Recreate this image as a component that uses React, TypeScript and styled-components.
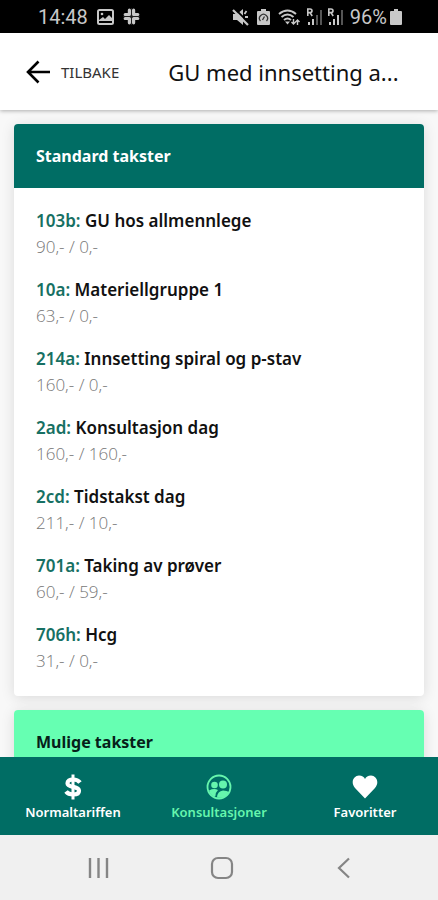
import React from "react";
import styled, { createGlobalStyle } from "styled-components";

const Global = createGlobalStyle`
  *, *::before, *::after { box-sizing: border-box; }
  html, body { margin: 0; }
  body { background: #f8f8f8; font-family: "Noto Sans", "Open Sans", sans-serif; color: #111; }
  button { font: inherit; border: 0; background: none; padding: 0; margin: 0; cursor: pointer; color: inherit; }
`;

const Screen = styled.div`
  height: 100vh;
  display: flex;
  flex-direction: column;
  overflow: hidden;
`;

const StatusBar = styled.div`
  flex: none;
  height: 33px;
  padding: 0 36px 0 38px;
  background: #000;
  color: #c8c8c8;
  display: flex;
  align-items: center;
  justify-content: space-between;
  font: 400 20px/24px Roboto, sans-serif;
`;

const StatusGroup = styled.div<{ $gap: number }>`
  display: flex;
  align-items: center;
  gap: ${(p) => p.$gap}px;
`;

const Header = styled.header`
  flex: none;
  position: relative;
  z-index: 1;
  height: 77px;
  padding: 0 30px 0 26px;
  background: #fff;
  box-shadow: 0 1px 4px rgba(0, 0, 0, 0.3);
  display: flex;
  align-items: center;
  gap: 49px;
`;

const BackButton = styled.button`
  flex: none;
  display: flex;
  align-items: center;
  gap: 10px;
  && { font-size: 15px; }
  color: #333;
`;

const Title = styled.h1`
  margin: 0;
  flex: 1;
  min-width: 0;
  font-size: 22px;
  line-height: 30px;
  font-weight: 400;
  white-space: nowrap;
`;

const Content = styled.main`
  flex: 1;
  min-height: 0;
  overflow: hidden;
  padding: 14px 14px 0;
  display: flex;
  flex-direction: column;
  gap: 14px;
`;

const Card = styled.section`
  flex: none;
  background: #fff;
  border-radius: 4px;
  overflow: hidden;
  box-shadow: 0 2px 14px rgba(0, 0, 0, 0.12);
`;

const CardTitle = styled.h2<{ $light?: boolean }>`
  margin: 0;
  padding: 20px 22px;
  font-size: 16px;
  line-height: 24px;
  font-weight: 700;
  background: ${(p) => (p.$light ? "#66ffb2" : "#006d64")};
  color: ${(p) => (p.$light ? "#062019" : "#fff")};
`;

const RateList = styled.ul`
  list-style: none;
  margin: 0;
  padding: 20px 22px 22px;
  display: flex;
  flex-direction: column;
  gap: 17px;
`;

const RateName = styled.div`
  font-size: 17px;
  line-height: 26px;
  font-weight: 600;
`;

const Code = styled.span`
  color: #177063;
`;

const Price = styled.div`
  font-family: "Open Sans", sans-serif;
  font-size: 17px;
  line-height: 26px;
  font-weight: 300;
  color: #777;
`;

const TabBar = styled.nav`
  flex: none;
  height: 78px;
  background: #006d64;
  display: grid;
  grid-template-columns: repeat(3, 1fr);
`;

const Tab = styled.button<{ $active?: boolean }>`
  && {
    display: flex;
    flex-direction: column;
    align-items: center;
    justify-content: center;
    gap: 2px;
    padding-top: 4px;
    color: ${(p) => (p.$active ? "#66f5ad" : "#fff")};
    font-size: 13px;
    line-height: 20px;
    font-weight: 600;
  }
`;

const SystemNav = styled.div`
  flex: none;
  height: 65px;
  background: #f0f0f0;
  display: flex;
  align-items: center;
  justify-content: space-between;
  padding: 0 82px 0 86px;
`;

const SysButton = styled.button`
  display: flex;
`;

const rates = [
  ["103b", "GU hos allmennlege", "90,- / 0,-"],
  ["10a", "Materiellgruppe 1", "63,- / 0,-"],
  ["214a", "Innsetting spiral og p-stav", "160,- / 0,-"],
  ["2ad", "Konsultasjon dag", "160,- / 160,-"],
  ["2cd", "Tidstakst dag", "211,- / 10,-"],
  ["701a", "Taking av prøver", "60,- / 59,-"],
  ["706h", "Hcg", "31,- / 0,-"],
];

const Picture = () => (
  <svg width="17" height="16" viewBox="0 0 17 16" aria-hidden="true">
    <rect x="1" y="1" width="15" height="14" rx="1.5" fill="none" stroke="#c8c8c8" strokeWidth="2" />
    <path d="M2 11l4-3 2 2 4-4 3 3v3H2Z" fill="#c8c8c8" />
    <circle cx="5" cy="5" r="1.3" fill="#c8c8c8" />
  </svg>
);

const Slack = () => (
  <svg width="17" height="17" viewBox="0 0 17 17" fill="none" stroke="#c8c8c8" strokeWidth="3.2" strokeLinecap="round" aria-hidden="true">
    <path d="M6.400 2.200v4.400M10.600 6.600V6M10.600 2.200v4.400M14.800 10.500h-4.200M10.600 14.800v-4.300M6.400 10.500v4.300M2.200 10.500h4.200M2.200 6.500h4.200M10.600 6.500h4.200" />
    <path d="M8.500 0v17M0 8.500h17" stroke="#222" strokeWidth="0.900" strokeLinecap="butt" />
  </svg>
);

const Muted = () => (
  <svg width="17" height="18" viewBox="0 0 17 18" aria-hidden="true">
    <path d="M1 6h4l6-5v16l-6-5H1Z" fill="#c8c8c8" />
    <path d="M12.500 6l2-3M13 9h3" stroke="#c8c8c8" strokeWidth="1.8" />
    <path d="M3 1l14 14" stroke="#000" strokeWidth="1.800" />
    <path d="M1 2l15 15" stroke="#c8c8c8" strokeWidth="2.200" />
  </svg>
);

const BatterySaver = () => (
  <svg width="13" height="18" viewBox="0 0 13 18" aria-hidden="true">
    <path d="M4 1h5v2h3q1 0 1 1v12q0 1-1 1H1q-1 0-1-1V4q0-1 1-1h3Z" fill="#c8c8c8" />
    <path d="M3.500 13a4 4 0 1 1 6 0M5.500 12l2-3.500" stroke="#333" strokeWidth="1.3" fill="none" />
  </svg>
);

const Wifi = () => (
  <svg width="22" height="18" viewBox="0 0 22 18" fill="none" stroke="#c8c8c8" strokeWidth="2" aria-hidden="true">
    <path d="M1 6q8.500-7 17 0M3.500 9q6-5 12 0M6 12q3.500-3 7 0" />
    <path d="M7 13.500h5L9.500 16.500Z" fill="#c8c8c8" stroke="none" />
    <path d="M15.500 11v5M13.500 14l2 2 2-2M19.500 17v-5M17.500 14l2-2 2 2" strokeWidth="1.400" />
  </svg>
);

const Signal = ({ strong }: { strong?: boolean }) => (
  <svg width="17" height="18" viewBox="0 0 17 18" aria-hidden="true">
    <path d="M1.800 8V1h2.200q2 0 2 1.800T4 4.600H2M4 4.600 6.200 8" fill="none" stroke="#c8c8c8" strokeWidth="1.600" />
    <path d="M2 14h2v3H2ZM6 11h2v6H6Z" fill="#c8c8c8" />
    <path d="M10 7h2v10h-2Z" fill={strong ? "#c8c8c8" : "#555"} />
    <path d="M14 2h2v15h-2Z" fill="#555" />
  </svg>
);

const Battery = () => (
  <svg width="12" height="18" viewBox="0 0 12 18" aria-hidden="true">
    <path d="M4 1h4v2h3q1 0 1 1v12q0 1-1 1H1q-1 0-1-1V4q0-1 1-1h3Z" fill="#c8c8c8" />
  </svg>
);

const Arrow = () => (
  <svg width="25" height="24" viewBox="0 0 25 24" fill="none" stroke="#000" strokeWidth="2.600" aria-hidden="true">
    <path d="M24 12H2M12.500 1.500 2 12l10.500 10.500" />
  </svg>
);

const Dollar = () => (
  <svg width="26" height="26" viewBox="0 0 26 26" fill="none" stroke="currentColor" aria-hidden="true">
    <path d="M20 8.500C18.500 6.500 16 5.500 13 5.500c-3.500 0-5.500 1.500-5.500 3.700 0 5 11.500 2.300 11.500 7.500 0 2.400-2.300 3.800-5.700 3.800-3.300 0-5.800-1-7.300-3" strokeWidth="4.200" />
    <path d="M13 .5v25" strokeWidth="3" />
  </svg>
);

const People = () => (
  <svg width="26" height="26" viewBox="0 0 26 26" aria-hidden="true">
    <circle cx="13" cy="13" r="11.500" fill="none" stroke="currentColor" strokeWidth="1.800" />
    <circle cx="8.500" cy="11" r="3.300" fill="currentColor" />
    <circle cx="17" cy="10.500" r="4" fill="currentColor" />
    <path d="M3 16.500q5-2.500 9-.5-2.500 2.500-2.500 5.500l-.5 1.500Q4 21 3 16.500ZM11 23.500Q11.500 17 17 16.500q4 0 6 1.500-3 7-12 5.500Z" fill="currentColor" />
  </svg>
);

const Heart = () => (
  <svg width="26" height="26" viewBox="0 0 26 26" aria-hidden="true">
    <path d="M13 24.500 3 14C-2 8 2 1.500 7 1.500c3 0 5 1.500 6 3.500 1-2 3-3.500 6-3.500 5 0 9 6.500 4 12.500Z" fill="currentColor" />
  </svg>
);

export default function App() {
  return (
    <Screen>
      <Global />
      <StatusBar>
        <StatusGroup $gap={9}>
          <span>14:48</span>
          <Picture />
          <Slack />
        </StatusGroup>
        <StatusGroup $gap={6}>
          <StatusGroup $gap={8}>
            <Muted />
            <BatterySaver />
            <Wifi />
          </StatusGroup>
          <StatusGroup $gap={4}>
            <Signal />
            <Signal strong />
          </StatusGroup>
          <StatusGroup $gap={3}>
            <span>96%</span>
            <Battery />
          </StatusGroup>
        </StatusGroup>
      </StatusBar>
      <Header>
        <BackButton type="button">
          <Arrow />
          TILBAKE
        </BackButton>
        <Title>GU med innsetting a...</Title>
      </Header>
      <Content>
        <Card>
          <CardTitle>Standard takster</CardTitle>
          <RateList>
            {rates.map(([code, name, price]) => (
              <li key={code}>
                <RateName>
                  <Code>{code}:</Code> {name}
                </RateName>
                <Price>{price}</Price>
              </li>
            ))}
          </RateList>
        </Card>
        <Card>
          <CardTitle $light>Mulige takster</CardTitle>
        </Card>
      </Content>
      <TabBar>
        <Tab type="button">
          <Dollar />
          Normaltariffen
        </Tab>
        <Tab type="button" $active aria-current="page">
          <People />
          Konsultasjoner
        </Tab>
        <Tab type="button">
          <Heart />
          Favoritter
        </Tab>
      </TabBar>
      <SystemNav>
        <SysButton type="button" aria-label="Recent apps">
          <svg width="25" height="24" viewBox="0 0 25 24" stroke="#858585" strokeWidth="2.400">
            <path d="M4 2v20M12.500 2v20M21 2v20" />
          </svg>
        </SysButton>
        <SysButton type="button" aria-label="Home">
          <svg width="24" height="24" viewBox="0 0 24 24" fill="none" stroke="#858585" strokeWidth="2.200">
            <rect x="2" y="2" width="20" height="20" rx="6" />
          </svg>
        </SysButton>
        <SysButton type="button" aria-label="Back">
          <svg width="24" height="24" viewBox="0 0 24 24" fill="none" stroke="#858585" strokeWidth="2.200">
            <path d="M17 2.500 7 12l10 9.500" />
          </svg>
        </SysButton>
      </SystemNav>
    </Screen>
  );
}
